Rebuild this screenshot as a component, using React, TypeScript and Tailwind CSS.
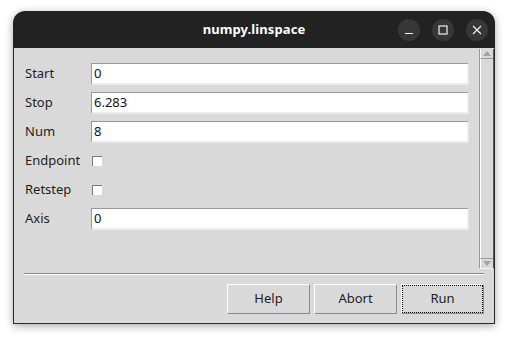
import React from "react";

const font = { fontFamily: '"Noto Sans", "Open Sans", sans-serif' };

function Field({ label, value }: { label: string; value: string }) {
  return (
    <div className="flex h-[22px] items-center">
      <div className="w-[66px] text-[13px] text-[#1e1e1e]">{label}</div>
      <div className="flex h-[22px] flex-1 items-center border-t border-l border-t-[#9a9a9a] border-l-[#9a9a9a] border-b-2 border-r-2 border-b-[#ececec] border-r-[#ececec] bg-white pl-[2px] text-[13px] text-[#111]">
        {value}
      </div>
    </div>
  );
}

function Check({ label }: { label: string }) {
  return (
    <div className="flex h-[22px] items-center">
      <div className="w-[67px] text-[13px] text-[#1e1e1e]">{label}</div>
      <div className="h-[10px] w-[10px] border-t border-l border-t-[#7a7a7a] border-l-[#7a7a7a] bg-white" />
    </div>
  );
}

function Btn({ label, focus }: { label: string; focus?: boolean }) {
  return (
    <div
      className={
        "flex h-[30px] w-[83px] items-center justify-center border border-t-white border-l-white border-b-[#8a8a8a] border-r-[#8a8a8a] bg-[#d9d9d9] text-[13px] text-[#1e1e1e] " +
        (focus ? "outline-1 outline-dotted outline-black outline-offset-[-2px]" : "")
      }
    >
      {label}
    </div>
  );
}

export default function App() {
  return (
    <div className="h-[340px] w-[508px] bg-white pl-[13px] pt-[11px]" style={font}>
      <div className="flex h-[313px] w-[482px] flex-col overflow-hidden rounded-t-[12px] shadow-[0_2px_8px_rgba(0,0,0,0.35)]">
        {/* title bar */}
        <div className="relative flex h-[37px] shrink-0 items-center justify-center bg-[#222222]">
          <div className="text-[13px] font-bold tracking-[0.1px] text-white" style={{ fontFamily: '"Noto Sans", sans-serif' }}>
            numpy.linspace
          </div>
          <div className="absolute right-[7px] top-[8px] flex gap-[12px]">
            <div className="flex h-[22px] w-[22px] items-center justify-center rounded-full bg-[#373737]">
              <svg width="10" height="10" viewBox="0 0 10 10">
                <line x1="1" y1="8.5" x2="9" y2="8.5" stroke="#f0f0f0" strokeWidth="1.2" />
              </svg>
            </div>
            <div className="flex h-[22px] w-[22px] items-center justify-center rounded-full bg-[#373737]">
              <svg width="10" height="10" viewBox="0 0 10 10">
                <rect x="1" y="1" width="8" height="8" fill="none" stroke="#f0f0f0" strokeWidth="1.2" />
              </svg>
            </div>
            <div className="flex h-[22px] w-[22px] items-center justify-center rounded-full bg-[#373737]">
              <svg width="10" height="10" viewBox="0 0 10 10">
                <path d="M1 1 L9 9 M9 1 L1 9" stroke="#f0f0f0" strokeWidth="1.2" />
              </svg>
            </div>
          </div>
        </div>
        {/* body */}
        <div className="flex flex-1 flex-col border-x border-b border-[#2a2a2a] bg-[#d9d9d9]">
          <div className="flex h-[222px] shrink-0">
            <div className="flex flex-1 flex-col gap-[7px] pl-[11px] pr-[10px] pt-[15px]">
              <Field label="Start" value="0" />
              <Field label="Stop" value="6.283" />
              <Field label="Num" value="8" />
              <Check label="Endpoint" />
              <Check label="Retstep" />
              <Field label="Axis" value="0" />
            </div>
            {/* scrollbar */}
            <div className="mt-[1px] flex h-[220px] w-[15px] flex-col border-l border-r border-l-[#9a9a9a] border-r-[#555] border-b border-b-[#f4f4f4] bg-[#d9d9d9]">
              <div className="flex h-[10px] shrink-0 items-center justify-center border-b border-[#9a9a9a] border-l border-l-white">
                <svg width="8" height="5" viewBox="0 0 8 5">
                  <path d="M0 5 L4 0 L8 5 Z" fill="#a3a3a3" />
                </svg>
              </div>
              <div className="flex-1 border-l border-l-white" />
              <div className="flex h-[10px] shrink-0 items-center justify-center border-t border-[#9a9a9a] border-l border-l-white">
                <svg width="8" height="5" viewBox="0 0 8 5">
                  <path d="M0 0 L4 5 L8 0 Z" fill="#a3a3a3" />
                </svg>
              </div>
            </div>
          </div>
          <div className="mx-[10px] mt-[3px] h-[2px] border-t border-b border-t-[#8a8a8a] border-b-white" />
          <div className="mt-[9px] flex justify-end gap-[4px] pr-[10px]">
            <Btn label="Help" />
            <Btn label="Abort" />
            <Btn label="Run" focus />
          </div>
        </div>
      </div>
    </div>
  );
}
